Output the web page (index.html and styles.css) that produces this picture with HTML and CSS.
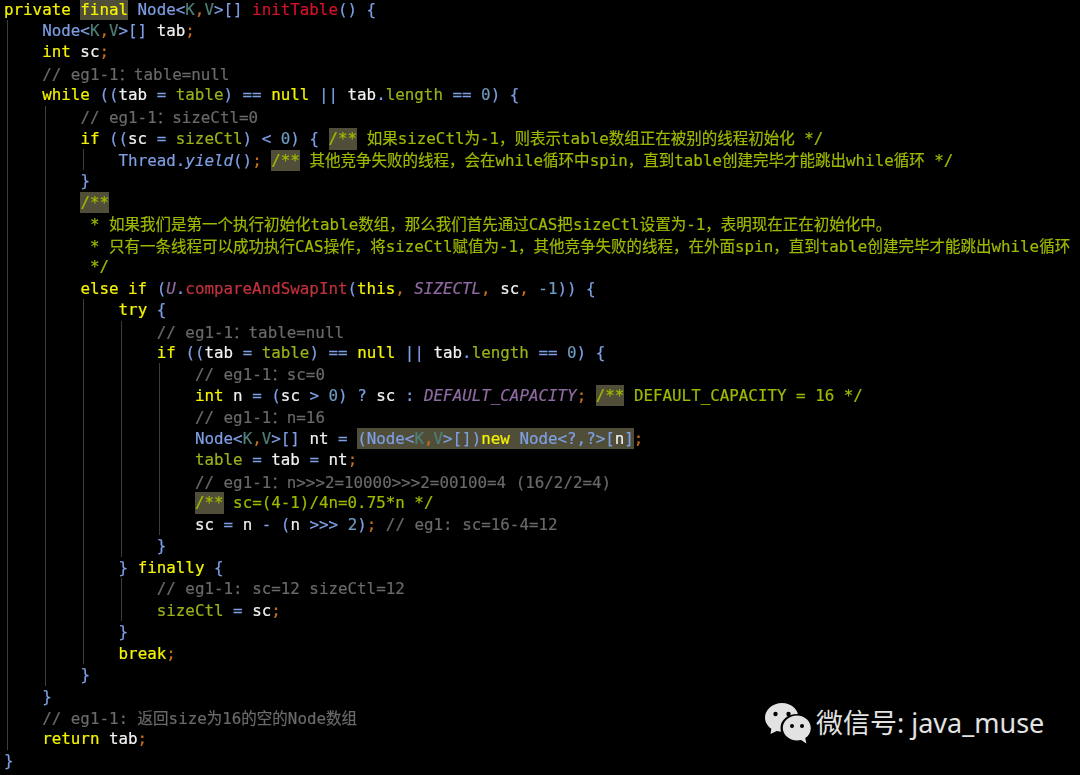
FILE: index.html
```html
<!DOCTYPE html>
<html lang="zh-CN">
<head>
<meta charset="utf-8">
<title>initTable</title>
<link rel="stylesheet" href="styles.css">
</head>
<body>
<main class="code">
<div class="ln"><span class="kw">private</span> <span class="hl"><span class="kw">final</span></span> <span class="ty">Node&lt;</span><span class="tv">K</span><span class="op">,</span><span class="tv">V</span><span class="ty">&gt;[]</span> <span class="fn">initTable</span><span class="ty">()</span> <span class="ty">{</span></div>
<div class="block">
  <div class="ln"><span class="ty">Node&lt;</span><span class="tv">K</span><span class="op">,</span><span class="tv">V</span><span class="ty">&gt;[]</span> <span class="v">tab</span><span class="op">;</span></div>
  <div class="ln"><span class="kw">int</span> <span class="v">sc</span><span class="op">;</span></div>
  <div class="ln cm">// eg1-1<span class="cj">：</span>table=null</div>
  <div class="ln"><span class="kw">while</span> <span class="ty">((</span><span class="v">tab</span> <span class="ty">=</span> <span class="fd">table</span><span class="ty">)</span> <span class="ty">==</span> <span class="kw">null</span> <span class="ty">||</span> <span class="v">tab</span><span class="ty">.</span><span class="fd">length</span> <span class="ty">==</span> <span class="nu">0</span><span class="ty">)</span> <span class="ty">{</span></div>
  <div class="block">
    <div class="ln cm">// eg1-1<span class="cj">：</span>sizeCtl=0</div>
    <div class="ln"><span class="kw">if</span> <span class="ty">((</span><span class="v">sc</span> <span class="ty">=</span> <span class="fd">sizeCtl</span><span class="ty">)</span> <span class="ty">&lt;</span> <span class="nu">0</span><span class="ty">)</span> <span class="ty">{</span> <span class="doc"><span class="hl">/**</span> <span class="cj">如果</span>sizeCtl<span class="cj">为</span>-1<span class="cj">，则表示</span>table<span class="cj">数组正在被别的线程初始化</span> */</span></div>
    <div class="block">
      <div class="ln"><span class="ty">Thread.</span><span class="ty it">yield</span><span class="ty">()</span><span class="op">;</span> <span class="doc"><span class="hl">/**</span> <span class="cj">其他竞争失败的线程，会在</span>while<span class="cj">循环中</span>spin<span class="cj">，直到</span>table<span class="cj">创建完毕才能跳出</span>while<span class="cj">循环</span> */</span></div>
    </div>
    <div class="ln ty">}</div>
    <div class="ln doc"><span class="hl">/**</span></div>
    <div class="ln doc"> * <span class="cj">如果我们是第一个执行初始化</span>table<span class="cj">数组，那么我们首先通过</span>CAS<span class="cj">把</span>sizeCtl<span class="cj">设置为</span>-1<span class="cj">，表明现在正在初始化中。</span></div>
    <div class="ln doc"> * <span class="cj">只有一条线程可以成功执行</span>CAS<span class="cj">操作，将</span>sizeCtl<span class="cj">赋值为</span>-1<span class="cj">，其他竞争失败的线程，在外面</span>spin<span class="cj">，直到</span>table<span class="cj">创建完毕才能跳出</span>while<span class="cj">循环</span></div>
    <div class="ln doc"> */</div>
    <div class="ln"><span class="kw">else if</span> <span class="ty">(</span><span class="st it">U</span><span class="ty">.</span><span class="mt">compareAndSwapInt</span><span class="ty">(</span><span class="kw">this</span><span class="op">,</span> <span class="st it">SIZECTL</span><span class="op">,</span> <span class="v">sc</span><span class="op">,</span> <span class="nu">-1</span><span class="ty">))</span> <span class="ty">{</span></div>
    <div class="block">
      <div class="ln"><span class="kw">try</span> <span class="ty">{</span></div>
      <div class="block">
        <div class="ln cm">// eg1-1<span class="cj">：</span>table=null</div>
        <div class="ln"><span class="kw">if</span> <span class="ty">((</span><span class="v">tab</span> <span class="ty">=</span> <span class="fd">table</span><span class="ty">)</span> <span class="ty">==</span> <span class="kw">null</span> <span class="ty">||</span> <span class="v">tab</span><span class="ty">.</span><span class="fd">length</span> <span class="ty">==</span> <span class="nu">0</span><span class="ty">)</span> <span class="ty">{</span></div>
        <div class="block">
          <div class="ln cm">// eg1-1<span class="cj">：</span>sc=0</div>
          <div class="ln"><span class="kw">int</span> <span class="v">n</span> <span class="ty">=</span> <span class="ty">(</span><span class="v">sc</span> <span class="ty">&gt;</span> <span class="nu">0</span><span class="ty">)</span> <span class="ty">?</span> <span class="v">sc</span> <span class="ty">:</span> <span class="st it">DEFAULT_CAPACITY</span><span class="op">;</span> <span class="doc"><span class="hl">/**</span> DEFAULT_CAPACITY = 16 */</span></div>
          <div class="ln cm">// eg1-1<span class="cj">：</span>n=16</div>
          <div class="ln"><span class="ty">Node&lt;</span><span class="tv">K</span><span class="op">,</span><span class="tv">V</span><span class="ty">&gt;[]</span> <span class="v">nt</span> <span class="ty">=</span> <span class="hl"><span class="ty">(Node&lt;</span><span class="tv">K</span><span class="op">,</span><span class="tv">V</span><span class="ty">&gt;[])</span><span class="kw">new</span> <span class="ty">Node&lt;?,?&gt;[</span><span class="v">n</span><span class="ty">]</span></span><span class="op">;</span></div>
          <div class="ln"><span class="fd">table</span> <span class="ty">=</span> <span class="v">tab</span> <span class="ty">=</span> <span class="v">nt</span><span class="op">;</span></div>
          <div class="ln cm">// eg1-1<span class="cj">：</span>n&gt;&gt;&gt;2=10000&gt;&gt;&gt;2=00100=4 (16/2/2=4)</div>
          <div class="ln doc"><span class="hl">/**</span> sc=(4-1)/4n=0.75*n */</div>
          <div class="ln"><span class="v">sc</span> <span class="ty">=</span> <span class="v">n</span> <span class="ty">-</span> <span class="ty">(</span><span class="v">n</span> <span class="ty">&gt;&gt;&gt;</span> <span class="nu">2</span><span class="ty">)</span><span class="op">;</span> <span class="cm">// eg1: sc=16-4=12</span></div>
        </div>
        <div class="ln ty">}</div>
      </div>
      <div class="ln"><span class="ty">}</span> <span class="kw">finally</span> <span class="ty">{</span></div>
      <div class="block">
        <div class="ln cm">// eg1-1: sc=12 sizeCtl=12</div>
        <div class="ln"><span class="fd">sizeCtl</span> <span class="ty">=</span> <span class="v">sc</span><span class="op">;</span></div>
      </div>
      <div class="ln ty">}</div>
      <div class="ln"><span class="kw">break</span><span class="op">;</span></div>
    </div>
    <div class="ln ty">}</div>
  </div>
  <div class="ln ty">}</div>
  <div class="ln cm">// eg1-1: <span class="cj">返回</span>size<span class="cj">为</span>16<span class="cj">的空的</span>Node<span class="cj">数组</span></div>
  <div class="ln"><span class="kw">return</span> <span class="v">tab</span><span class="op">;</span></div>
</div>
<div class="ln ty">}</div>
</main>
<aside class="mark">
  <svg class="mark-icon" width="50" height="42" viewBox="0 0 50 42" aria-hidden="true">
    <path class="bubble" d="M18 1C8.800 1 1 7.600 1 15.500c0 4.600 2.500 8.600 6.300 11.200L6.500 32l6.200-3c1.700.5 3.500.7 5.300.7 9.400 0 16.500-6.400 16.500-14.200S27.400 1 18 1z"/>
    <ellipse class="bubble-edge" cx="33" cy="26" rx="16.500" ry="14"/>
    <path class="bubble" d="M33 13.500c-7.700 0-14.200 5.600-14.200 12.500s6.500 12.500 14.200 12.500c1.400 0 2.800-.2 4.100-.5l5.200 3.500-1-5.400c3.400-2.300 5.500-6 5.500-10.100 0-6.900-6.100-12.500-13.800-12.500z"/>
    <circle class="eye" cx="11.500" cy="12" r="2.200"/>
    <circle class="eye" cx="24.500" cy="12" r="2.200"/>
    <circle class="eye" cx="28" cy="24" r="2"/>
    <circle class="eye" cx="38" cy="24" r="2"/>
  </svg>
  <span class="mark-text">微信号: java_muse</span>
</aside>
</body>
</html>
```
FILE: styles.css
```css
html, body {
  margin: 0;
  padding: 0;
  height: 775px;
  overflow: hidden;
  background: #000;
}

body {
  position: relative;
}

.code {
  margin-top: -1.5px;
  padding-left: 4px;
  font: 15.85px/21.48px "DejaVu Sans Mono", "Noto Sans CJK SC", monospace;
  color: #f2f2f2;
  filter: blur(0.35px);
  -webkit-text-stroke: 0.2px currentColor;
}

.ln {
  height: 21.48px;
  white-space: pre;
}

.block {
  margin-left: 2.5px;
  padding-left: 34.7px;
  border-left: 1px solid #3d3d3d;
}

.cj {
  font-family: "Noto Sans CJK SC", sans-serif;
  font-size: 15.5px;
}

.it { font-style: italic; }
.kw { color: #f4f400; }
.ty { color: #7f9fe4; }
.tv { color: #4f7f78; }
.op { color: #c8701e; }
.v  { color: #f2f2f2; }
.fn { color: #d8102a; }
.mt { color: #c2323c; }
.fd { color: #9cb11a; }
.nu { color: #6d9cc0; }
.st { color: #8f6aa3; }
.cm { color: #6a6a6a; }
.doc { color: #a0b800; }

.hl {
  display: inline-block;
  height: 21.48px;
  background: #504e38;
}

.mark {
  position: absolute;
  left: 764px;
  top: 701px;
  display: flex;
  align-items: center;
  gap: 2px;
  color: #e2e2e2;
}

.mark-icon { display: block; }
.bubble { fill: #e2e2e2; }
.bubble-edge { fill: #000; }
.eye { fill: #000; }

.mark-text {
  font: 27px/44px "Noto Sans", "Noto Sans CJK SC", sans-serif;
  white-space: pre;
}
```
